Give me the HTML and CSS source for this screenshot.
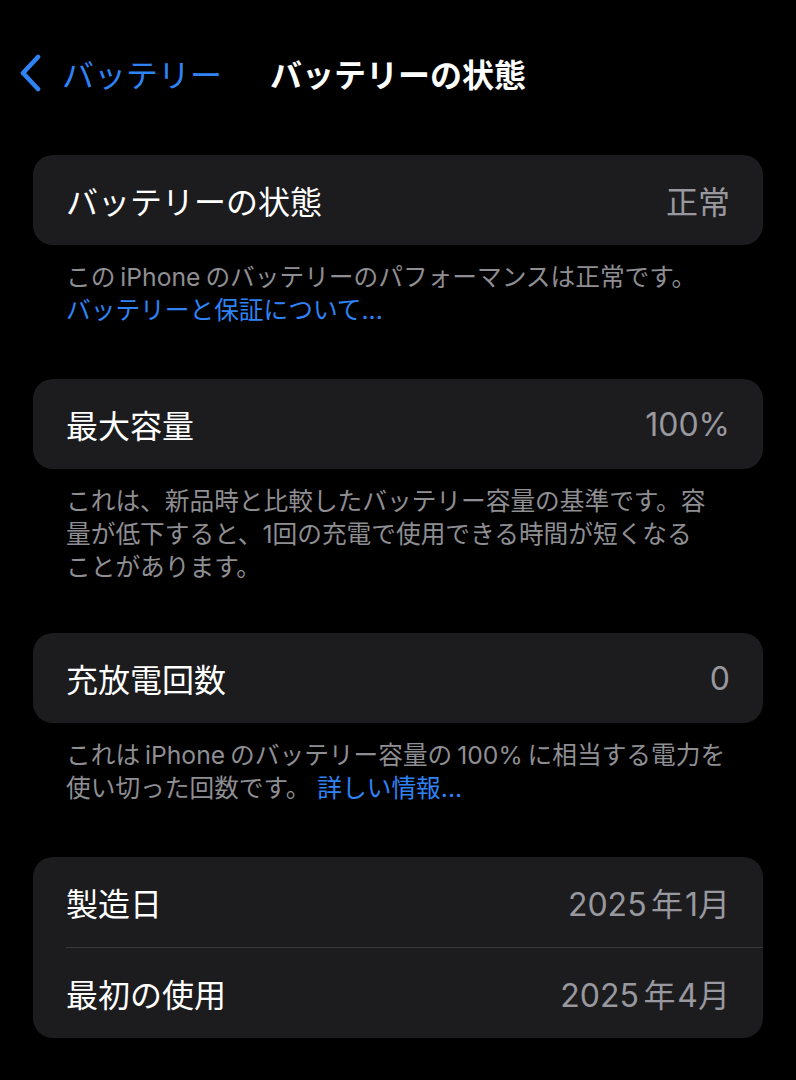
FILE: index.html
```html
<!DOCTYPE html>
<html lang="ja">
<head>
  <meta charset="UTF-8">
  <title>バッテリーの状態</title>
  <link rel="stylesheet" href="styles.css">
</head>
<body>
  <div class="nav">
    <a class="back" href="#">
      <svg viewBox="0 0 24 38" width="24" height="38">
        <path d="M20 3 L5 19 L20 35" fill="none" stroke="currentColor" stroke-width="4.6" stroke-linecap="round" stroke-linejoin="round"/>
      </svg>
      <span>バッテリー</span>
    </a>
    <h1>バッテリーの状態</h1>
    <div></div>
  </div>

  <div class="settings">
    <div class="group">
      <div class="card">
        <div class="row">
          <span class="label">バッテリーの状態</span>
          <span class="value">正常</span>
        </div>
      </div>
      <p class="footer">この<span class="en">iPhone</span>のバッテリーのパフォーマンスは正常です。<br><a href="#">バッテリーと保証について...</a></p>
    </div>

    <div class="group group-tall">
      <div class="card">
        <div class="row">
          <span class="label">最大容量</span>
          <span class="value">100%</span>
        </div>
      </div>
      <p class="footer">これは、新品時と比較したバッテリー容量の基準です。容<br>量が低下すると、1回の充電で使用できる時間が短くなる<br>ことがあります。</p>
    </div>

    <div class="group">
      <div class="card">
        <div class="row">
          <span class="label">充放電回数</span>
          <span class="value">0</span>
        </div>
      </div>
      <p class="footer">これは<span class="en">iPhone</span>のバッテリー容量の<span class="en">100%</span>に相当する電力を<br>使い切った回数です。 <a href="#">詳しい情報...</a></p>
    </div>

    <div class="group">
      <div class="card">
        <div class="row">
          <span class="label">製造日</span>
          <span class="value">2025<span class="unit">年</span>1月</span>
        </div>
        <div class="row">
          <span class="label">最初の使用</span>
          <span class="value">2025<span class="unit">年</span>4月</span>
        </div>
      </div>
    </div>
  </div>
</body>
</html>
```

FILE: styles.css
```css
body {
  margin: 0;
  padding: 0;
  background: #000;
  color: #fff;
  font-family: "Inter", "Noto Sans CJK JP", sans-serif;
}

a {
  color: #2f83f5;
  text-decoration: none;
}

.nav {
  height: 146px;
  display: grid;
  grid-template-columns: 1fr auto 1fr;
  align-items: center;
}

.back {
  display: flex;
  align-items: center;
  gap: 20px;
  padding-left: 18px;
  font-size: 32px;
}

.back svg {
  display: block;
}

.nav h1 {
  margin: 0;
  font-size: 32px;
  font-weight: 700;
}

.settings {
  padding: 9px 33px 0;
}

.group {
  margin-bottom: 52px;
}

.group-tall {
  margin-bottom: 49px;
}

.card {
  background: #1c1c1e;
  border-radius: 20px;
  overflow: hidden;
}

.row {
  height: 90px;
  margin-left: 33px;
  padding-right: 33px;
  display: flex;
  align-items: center;
  justify-content: space-between;
  font-size: 32px;
}

.row + .row {
  border-top: 1px solid #38383a;
  height: 90px;
}

.value {
  color: #98989e;
}

.unit {
  margin: 0 0.06em 0 0.14em;
}

.en {
  margin: 0 0.2em;
}

.footer {
  margin: 0;
  padding: 16px 33px 0;
  font-size: 24.7px;
  line-height: 33px;
  color: #8e8e93;
}
```
